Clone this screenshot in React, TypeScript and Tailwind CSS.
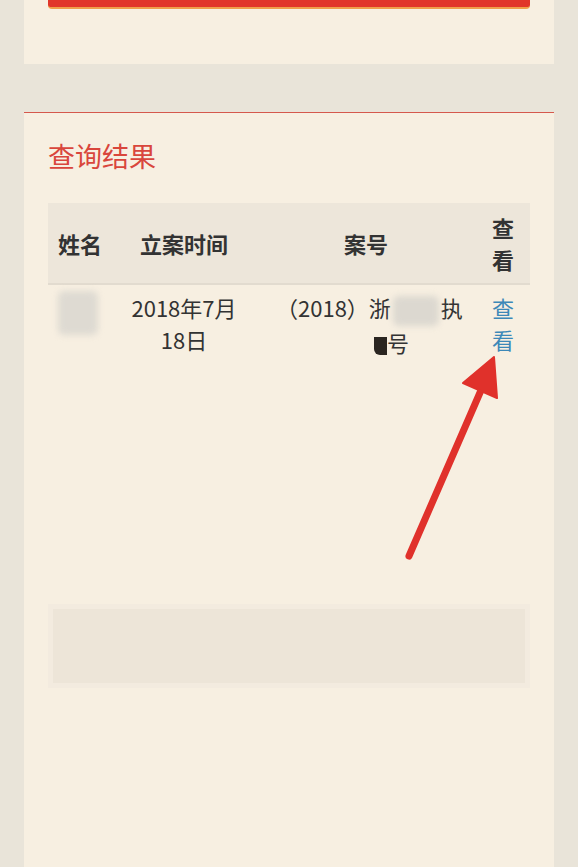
const font = { fontFamily: '"Noto Sans CJK SC", "Noto Sans", sans-serif' }

const Blob = ({ className }: { className: string }) => (
  <span className={`inline-block align-middle rounded-md blur-[3px] ${className}`} />
)

const Arrow = () => (
  <svg
    className="pointer-events-none absolute left-0 top-0"
    width="578"
    height="867"
    viewBox="0 0 578 867"
  >
    <line x1="409" y1="556" x2="482" y2="388" stroke="#e0312b" strokeWidth="7" strokeLinecap="round" />
    <polygon points="494,357 463,383 497,398" fill="#e0312b" stroke="#e0312b" strokeWidth="2" strokeLinejoin="round" />
  </svg>
)

export default function App() {
  return (
    <div className="relative min-h-[867px] overflow-hidden bg-[#e9e4d9] px-[24px]" style={font}>
      {/* top card with the search button peeking in */}
      <div className="h-[64px] bg-[#f7efe1] px-[24px]">
        <div className="h-[9px] rounded-b-[4px] border-b-[2px] border-[#f0a04a] bg-[#e1362a]" />
      </div>

      <div className="mt-[48px] min-h-[760px] border-t border-[#d5584c] bg-[#f7efe1] px-[24px] pt-[24px]">
        <h2 className="text-[27px] leading-[38px] text-[#d9463c]">查询结果</h2>

        <table className="mt-[28px] w-full table-fixed border-collapse text-[#333]">
          <colgroup>
            <col className="w-[64px]" />
            <col className="w-[144px]" />
            <col className="w-[220px]" />
            <col />
          </colgroup>
          <thead>
            <tr className="h-[81px] border-b-[2px] border-[#e2dbcf] bg-[#ede6da] text-[22px] font-semibold">
              <th className="pl-[10px] text-left">姓名</th>
              <th className="text-center">立案时间</th>
              <th className="text-center">案号</th>
              <th className="text-center">
                <div className="flex flex-col items-center leading-[32px]">
                  <span>查</span>
                  <span>看</span>
                </div>
              </th>
            </tr>
          </thead>
          <tbody>
            <tr className="align-top text-[22px] leading-[32px]">
              <td className="pl-[10px] pt-[6px]">
                <Blob className="h-[44px] w-[40px] bg-[#dedad2]" />
              </td>
              <td className="pt-[6px] text-center">
                2018年7月
                <br />
                18日
              </td>
              <td className="pt-[6px] pl-[20px] text-left whitespace-nowrap">
                <div>
                  （2018）浙
                  <Blob className="mx-[2px] h-[30px] w-[46px] bg-[#dcd8d0]" />
                  执
                </div>
                <div className="pl-[98px]">
                  <span className="inline-block h-[18px] w-[13px] rounded-bl-[6px] bg-[#2a2520] align-middle" />
                  号
                </div>
              </td>
              <td className="pt-[6px] text-center text-[#3c88b8]">
                <div className="flex flex-col items-center">
                  <span>查</span>
                  <span>看</span>
                </div>
              </td>
            </tr>
          </tbody>
        </table>

        <div className="mt-[246px] h-[84px] border-[5px] border-[#f3ebdf] bg-[#ede5d8]" />
      </div>

      <Arrow />
    </div>
  )
}
